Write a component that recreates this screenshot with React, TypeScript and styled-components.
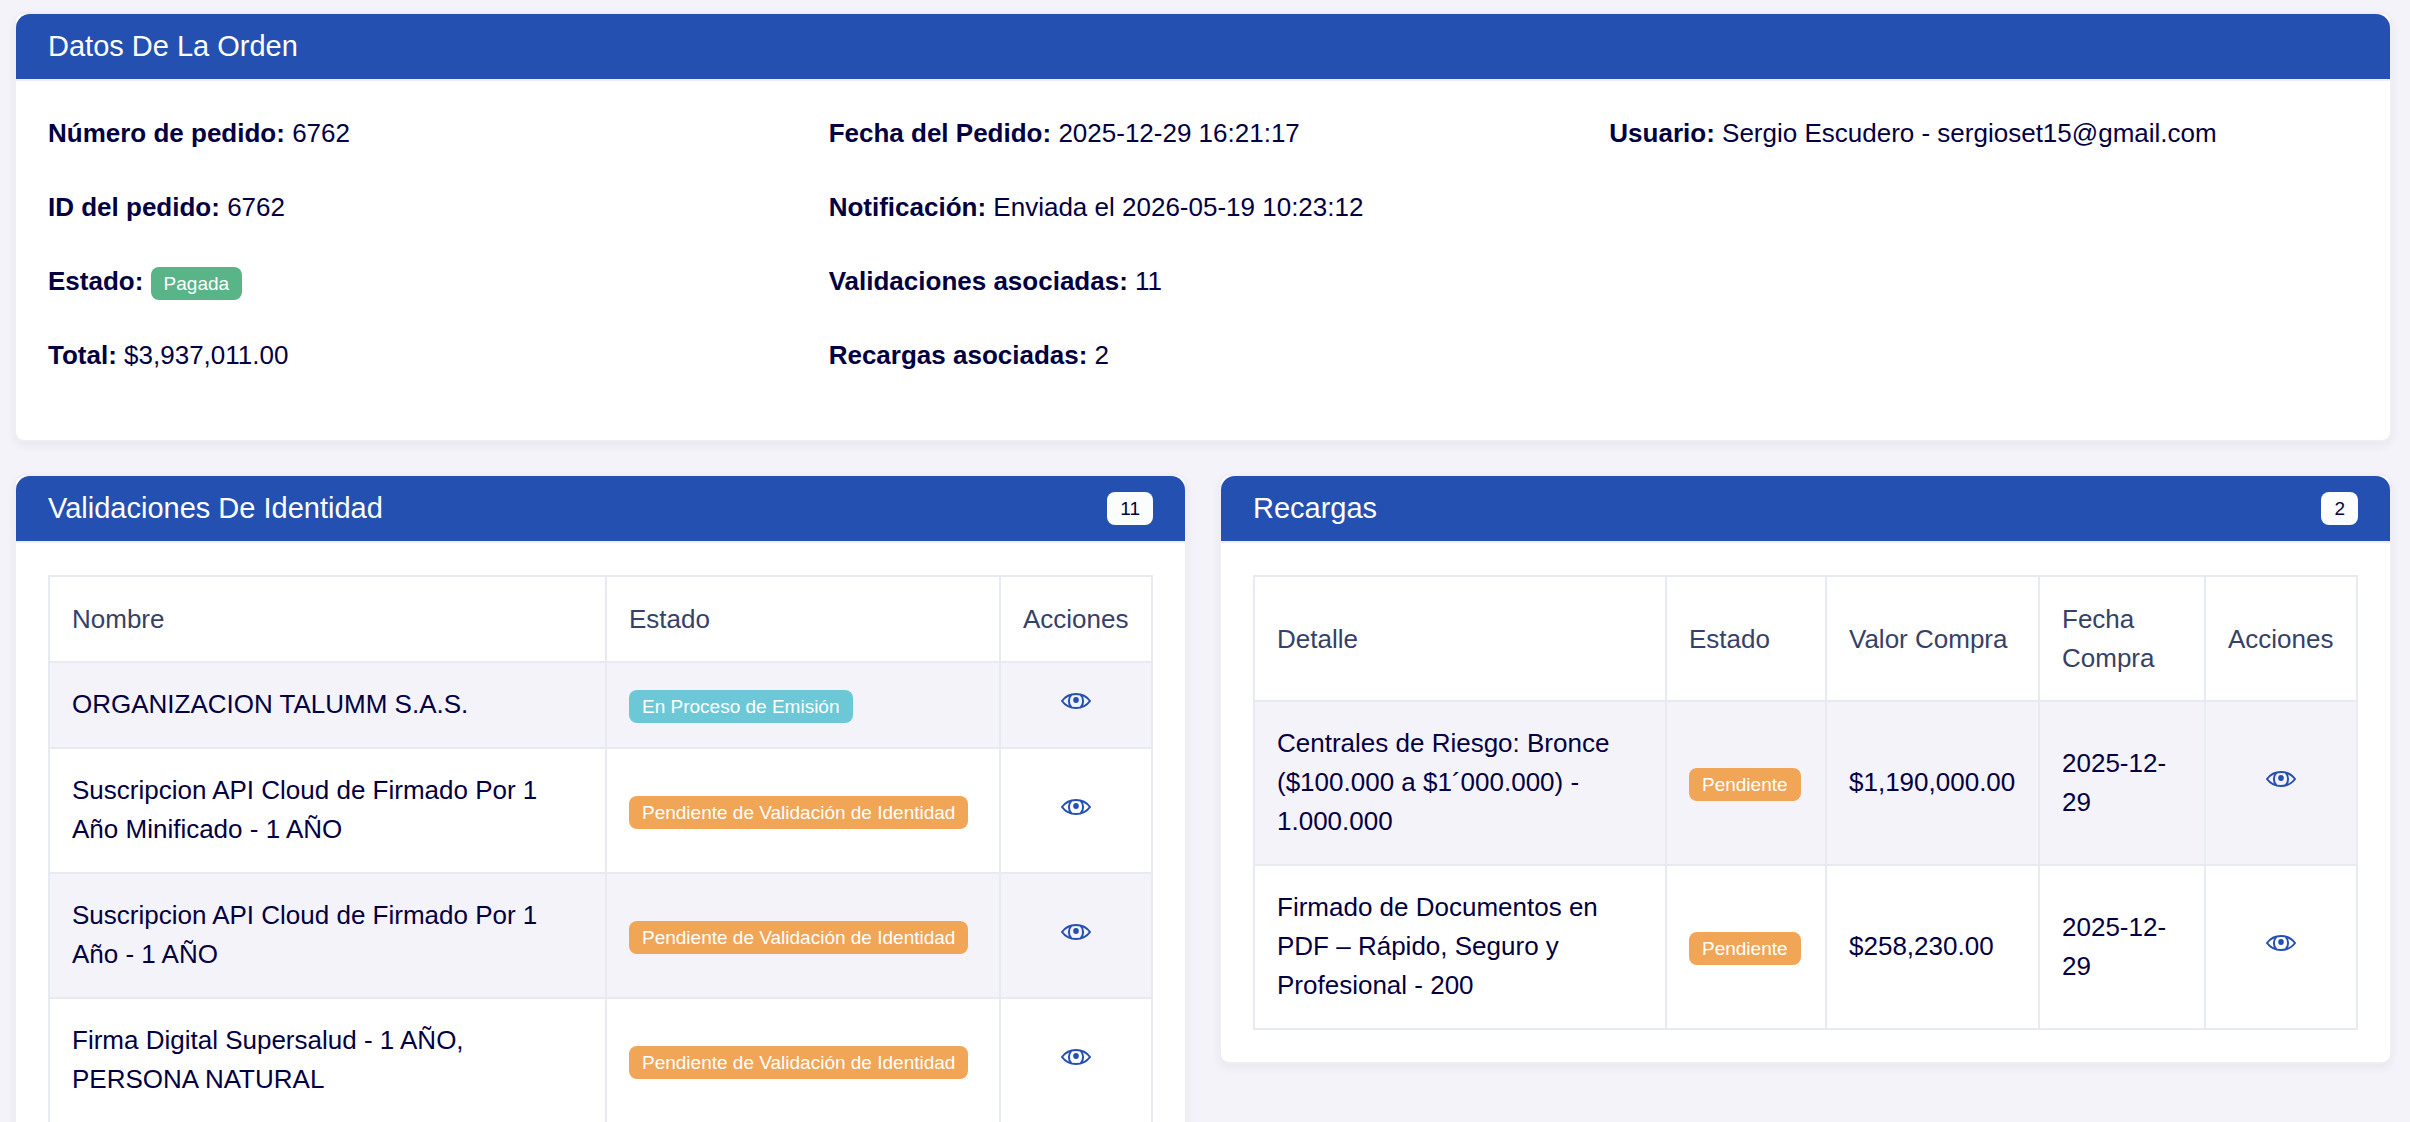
import React from "react";
import styled, { createGlobalStyle } from "styled-components";

const GlobalStyle = createGlobalStyle`
  *, *::before, *::after { box-sizing: border-box; }
  html { scrollbar-width: none; }
  body {
    margin: 0;
    background: #f4f3f9;
    color: #030041;
    font-family: "Liberation Sans", Arial, Helvetica, sans-serif;
    font-size: 26px;
    line-height: 39px;
  }
`;

const Page = styled.main`
  display: grid;
  gap: 32px;
  padding: 12px 18px 32px 14px;
`;

const Panels = styled.div`
  display: grid;
  grid-template-columns: repeat(2, minmax(0, 1fr));
  align-items: start;
  gap: 32px;
`;

const Card = styled.section`
  background: #fff;
  background-clip: padding-box;
  border: 2px solid #eeeef4;
  border-radius: 10px;
  box-shadow: 0 4px 8px rgba(40, 50, 80, 0.06);
`;

const CardHeader = styled.header`
  display: flex;
  align-items: center;
  justify-content: space-between;
  padding: 16px 32px;
  background: #2450b1;
  border-radius: 14px 14px 0 0;
`;

const CardTitle = styled.h2`
  margin: 0;
  color: #fff;
  font-size: 29px;
  font-weight: 400;
  line-height: 33px;
`;

const CardBody = styled.div`
  padding: 32px;
  border-top: 2px solid #eeeef4;
`;

type Tone = "success" | "info" | "warning" | "light";

const tones: Record<Tone, { back: string; text: string }> = {
  success: { back: "#59b488", text: "#fff" },
  info: { back: "#6cc8d7", text: "#fff" },
  warning: { back: "#f1a556", text: "#fff" },
  light: { back: "#fbfdfd", text: "#030041" },
};

const Badge = styled.span<{ $tone: Tone }>`
  display: inline-block;
  padding: 7px 13px;
  border-radius: 8px;
  background: ${({ $tone }) => tones[$tone].back};
  color: ${({ $tone }) => tones[$tone].text};
  font-size: 19px;
  line-height: 19px;
  white-space: nowrap;
`;

const InfoGrid = styled.div`
  display: grid;
  grid-template-columns: repeat(3, minmax(0, 1fr));
  gap: 32px;
  padding: 1px 0 33px;
`;

const InfoColumn = styled.div`
  display: flex;
  flex-direction: column;
  gap: 35px;
`;

const InfoLine = styled.p`
  margin: 0;
`;

const Table = styled.table`
  width: 100%;
  table-layout: fixed;
  border-collapse: collapse;
`;

const Column = styled.col<{ $width?: number }>`
  width: ${({ $width }) => ($width ? `${$width}px` : "auto")};
`;

const HeadCell = styled.th`
  padding: 23px 22px 22px;
  border: 2px solid #e8eaf2;
  color: #364168;
  font-weight: 400;
  text-align: left;
`;

const Row = styled.tr`
  &:nth-child(odd) {
    background: #f4f3f9;
  }
`;

const Cell = styled.td<{ $center?: boolean }>`
  padding: 22px 22px 23px;
  border: 2px solid #e8eaf2;
  text-align: ${({ $center }) => ($center ? "center" : "left")};
`;

const ViewLink = styled.a`
  color: #2450b1;

  svg {
    width: 30px;
    height: 30px;
    vertical-align: -3px;
  }
`;

const EyeIcon = () => (
  <svg viewBox="0 0 30 30" fill="none" stroke="currentColor" strokeWidth="2" aria-hidden="true">
    <path
      d="M1 15C4.2 10.6 9 8 15 8s10.800 2.600 14 7c-3.200 4.400-8 7-14 7S4.200 19.400 1 15Z"
      strokeLinejoin="round"
    />
    <path d="M10.300 8.900C7.100 12.200 7.100 17.800 10.300 21.100M19.700 8.900c3.200 3.300 3.200 8.900 0 12.200" />
    <ellipse cx="15" cy="14" rx="2.800" ry="3" fill="currentColor" stroke="none" />
  </svg>
);

const View = ({ name }: { name: string }) => (
  <ViewLink href="#" aria-label={name}>
    <EyeIcon />
  </ViewLink>
);

const PENDING = "Pendiente de Validación de Identidad";

const validations: { name: string; state: string; tone: Tone }[] = [
  { name: "ORGANIZACION TALUMM S.A.S.", state: "En Proceso de Emisión", tone: "info" },
  { name: "Suscripcion API Cloud de Firmado Por 1 Año Minificado - 1 AÑO", state: PENDING, tone: "warning" },
  { name: "Suscripcion API Cloud de Firmado Por 1 Año - 1 AÑO", state: PENDING, tone: "warning" },
  { name: "Firma Digital Supersalud - 1 AÑO, PERSONA NATURAL", state: PENDING, tone: "warning" },
];

const topUps = [
  {
    detail: "Centrales de Riesgo: Bronce ($100.000 a $1´000.000) - 1.000.000",
    amount: "$1,190,000.00",
    date: "2025-12-29",
  },
  {
    detail: "Firmado de Documentos en PDF – Rápido, Seguro y Profesional - 200",
    amount: "$258,230.00",
    date: "2025-12-29",
  },
];

const Info = ({ label, children }: { label: string; children: React.ReactNode }) => (
  <InfoLine>
    <strong>{label}:</strong> {children}
  </InfoLine>
);

export default function App() {
  return (
    <>
      <GlobalStyle />
      <Page>
        <Card>
          <CardHeader>
            <CardTitle>Datos De La Orden</CardTitle>
          </CardHeader>
          <CardBody>
            <InfoGrid>
              <InfoColumn>
                <Info label="Número de pedido">6762</Info>
                <Info label="ID del pedido">6762</Info>
                <Info label="Estado">
                  <Badge $tone="success">Pagada</Badge>
                </Info>
                <Info label="Total">$3,937,011.00</Info>
              </InfoColumn>
              <InfoColumn>
                <Info label="Fecha del Pedido">2025-12-29 16:21:17</Info>
                <Info label="Notificación">Enviada el 2026-05-19 10:23:12</Info>
                <Info label="Validaciones asociadas">11</Info>
                <Info label="Recargas asociadas">2</Info>
              </InfoColumn>
              <InfoColumn>
                <Info label="Usuario">Sergio Escudero - sergioset15@gmail.com</Info>
              </InfoColumn>
            </InfoGrid>
          </CardBody>
        </Card>

        <Panels>
          <Card>
            <CardHeader>
              <CardTitle>Validaciones De Identidad</CardTitle>
              <Badge $tone="light">11</Badge>
            </CardHeader>
            <CardBody>
              <Table>
                <colgroup>
                  <Column />
                  <Column $width={394} />
                  <Column $width={152} />
                </colgroup>
                <thead>
                  <tr>
                    <HeadCell>Nombre</HeadCell>
                    <HeadCell>Estado</HeadCell>
                    <HeadCell>Acciones</HeadCell>
                  </tr>
                </thead>
                <tbody>
                  {validations.map((item) => (
                    <Row key={item.name}>
                      <Cell>{item.name}</Cell>
                      <Cell>
                        <Badge $tone={item.tone}>{item.state}</Badge>
                      </Cell>
                      <Cell $center>
                        <View name={item.name} />
                      </Cell>
                    </Row>
                  ))}
                </tbody>
              </Table>
            </CardBody>
          </Card>

          <Card>
            <CardHeader>
              <CardTitle>Recargas</CardTitle>
              <Badge $tone="light">2</Badge>
            </CardHeader>
            <CardBody>
              <Table>
                <colgroup>
                  <Column />
                  <Column $width={160} />
                  <Column $width={213} />
                  <Column $width={166} />
                  <Column $width={152} />
                </colgroup>
                <thead>
                  <tr>
                    <HeadCell>Detalle</HeadCell>
                    <HeadCell>Estado</HeadCell>
                    <HeadCell>Valor Compra</HeadCell>
                    <HeadCell>Fecha Compra</HeadCell>
                    <HeadCell>Acciones</HeadCell>
                  </tr>
                </thead>
                <tbody>
                  {topUps.map((item) => (
                    <Row key={item.detail}>
                      <Cell>{item.detail}</Cell>
                      <Cell>
                        <Badge $tone="warning">Pendiente</Badge>
                      </Cell>
                      <Cell>{item.amount}</Cell>
                      <Cell>{item.date}</Cell>
                      <Cell $center>
                        <View name={item.detail} />
                      </Cell>
                    </Row>
                  ))}
                </tbody>
              </Table>
            </CardBody>
          </Card>
        </Panels>
      </Page>
    </>
  );
}
